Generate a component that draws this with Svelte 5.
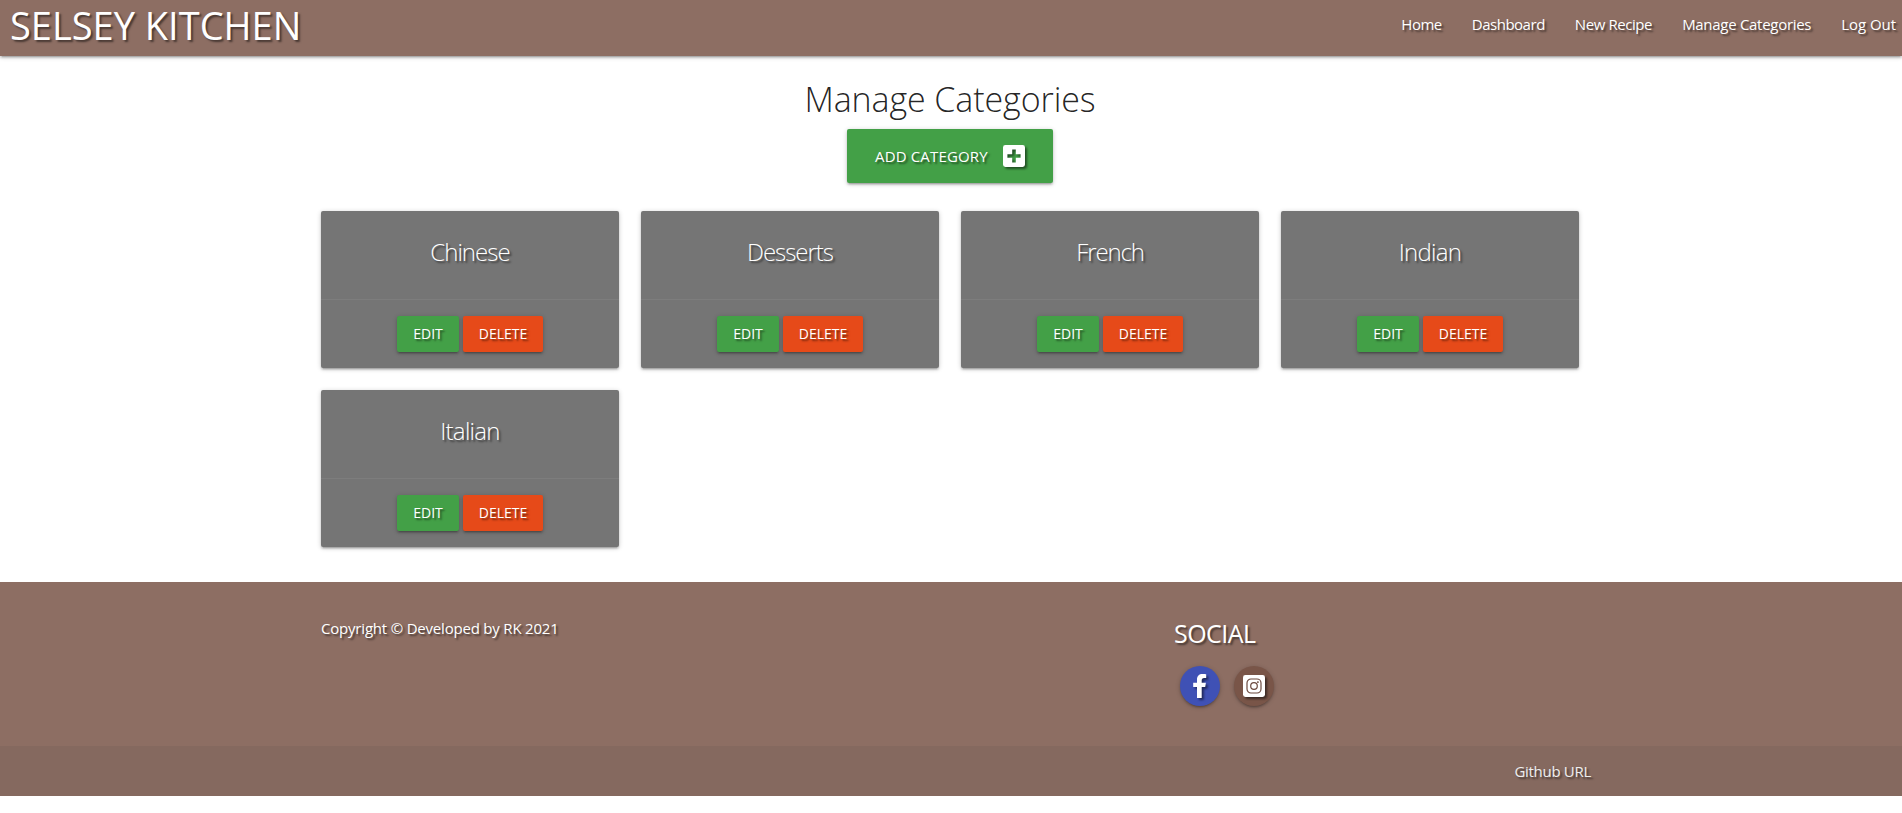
<script>
  const links = [
    { label: 'Home', tracking: -0.5 },
    { label: 'Dashboard', tracking: -0.48 },
    { label: 'New Recipe', tracking: -0.42 },
    { label: 'Manage Categories', tracking: -0.29 },
    { label: 'Log Out', tracking: -0.05 }
  ];
  const categories = [
    { name: 'Chinese', tracking: -0.95 },
    { name: 'Desserts', tracking: -1.05 },
    { name: 'French', tracking: -1.15 },
    { name: 'Indian', tracking: -0.7 },
    { name: 'Italian', tracking: -0.7 }
  ];
</script>

<header>
  <a class="logo" href="#home">SELSEY KITCHEN</a>
  <nav>
    {#each links as link}
      <a href="#nav" style:letter-spacing="{link.tracking}px">{link.label}</a>
    {/each}
  </nav>
</header>

<main>
  <h1>Manage Categories</h1>
  <a class="add" href="#add">
    <span>ADD CATEGORY</span>
    <svg class="icon" width="22" height="22" viewBox="0 0 22 22">
      <path fill="#fff" fill-rule="evenodd" d="M2.4 0h17.2A2.4 2.4 0 0 1 22 2.4v17.2a2.4 2.4 0 0 1-2.4 2.4H2.4A2.4 2.4 0 0 1 0 19.6V2.4A2.4 2.4 0 0 1 2.4 0zM9.200 4.400v4.800H4.400v3.600h4.800v4.800h3.600v-4.800h4.800v-3.600h-4.800V4.400z" />
    </svg>
  </a>
  <section class="grid">
    {#each categories as category}
      <article>
        <h2 style:letter-spacing="{category.tracking}px">{category.name}</h2>
        <div class="actions">
          <a class="btn edit" href="#edit">EDIT</a>
          <a class="btn delete" href="#delete">DELETE</a>
        </div>
      </article>
    {/each}
  </section>
</main>

<footer>
  <div class="columns">
    <p>Copyright © Developed by RK 2021</p>
    <div class="social">
      <h3>SOCIAL</h3>
      <div class="circles">
        <a class="circle facebook" href="#facebook" aria-label="Facebook">
          <svg class="icon" width="14" height="24" viewBox="0 0 14 24">
            <path fill="#fff" d="M4 24V13.100H.2V8.800H4V5.600C4 1.900 6.100 0 9.500 0c1.500 0 3.700.2 3.700.2v3.900h-2C9.300 4.100 8.700 5.200 8.700 6.400v2.400h4.200l-.7 4.300H8.700V24z" />
          </svg>
        </a>
        <a class="circle instagram" href="#instagram" aria-label="Instagram">
          <svg class="icon" width="22" height="22" viewBox="0 0 22 22">
            <rect width="22" height="22" rx="2.4" fill="#fff" />
            <g fill="none" stroke="#6b4a3f" stroke-width="1.2">
              <rect x="4" y="4" width="14" height="14" rx="4" />
              <circle cx="11" cy="11" r="3.300" />
            </g>
            <circle cx="14.900" cy="7.100" r=".95" fill="#6b4a3f" />
          </svg>
        </a>
      </div>
    </div>
  </div>
  <div class="bar"><a href="#github">Github URL</a></div>
</footer>

<style>
  :global(body) {
    margin: 0;
    background: #fff;
    font: 15px/1.5 'Open Sans', 'Noto Sans', sans-serif;
  }
  a {
    color: #fff;
    text-decoration: none;
  }
  h1, h2, h3, p {
    margin: 0;
  }
  header, footer, .add, h2, .btn {
    text-shadow: 2px 2px 2px rgba(0, 0, 0, 0.5);
  }
  header, .add, article, .btn, .circle {
    box-shadow: 0 2px 2px 0 rgba(0, 0, 0, 0.14), 0 3px 1px -2px rgba(0, 0, 0, 0.12), 0 1px 5px 0 rgba(0, 0, 0, 0.2);
  }
  header {
    display: flex;
    justify-content: space-between;
    height: 56px;
    padding: 0 6px 0 10px;
    box-sizing: border-box;
    background: #8d6e63;
    line-height: 49px;
  }
  .logo {
    font-size: 38px;
    line-height: 51px;
  }
  nav {
    display: flex;
    gap: 30px;
  }
  main {
    display: flex;
    flex-direction: column;
    align-items: center;
    padding: 21px 0 35px;
  }
  h1 {
    margin-right: 2px;
    font-size: 34px;
    font-weight: 350;
    line-height: 44px;
    letter-spacing: -0.1px;
    color: rgba(0, 0, 0, 0.87);
  }
  .add {
    display: flex;
    align-items: center;
    justify-content: space-between;
    box-sizing: border-box;
    width: 206px;
    height: 54px;
    margin: 8px 2px 28px 0;
    padding: 0 28px;
    border-radius: 2px;
    background: #43a047;
    letter-spacing: 0.15px;
    white-space: nowrap;
  }
  .icon {
    display: block;
    overflow: visible;
    filter: drop-shadow(2px 2px 1px rgba(0, 0, 0, 0.5));
  }
  .grid {
    display: grid;
    grid-template-columns: repeat(4, 298px);
    gap: 22px;
    width: 1260px;
  }
  article {
    border-radius: 2px;
    background: #757575;
  }
  h2 {
    padding: 24px 0 31px;
    color: #fff;
    font-size: 24px;
    font-weight: 330;
    line-height: 33px;
    text-align: center;
  }
  .actions {
    display: flex;
    justify-content: center;
    gap: 4px;
    padding: 16px;
    border-top: 1px solid rgba(160, 160, 160, 0.2);
  }
  .btn {
    width: 62px;
    border-radius: 2px;
    font-size: 14px;
    line-height: 36px;
    text-align: center;
  }
  .edit {
    background: #43a047;
  }
  .delete {
    width: 80px;
    background: #e64a19;
  }
  footer {
    background: #8d6e63;
    color: #fff;
  }
  .columns {
    display: grid;
    grid-template-columns: 853px 407px;
    justify-content: center;
    box-sizing: border-box;
    height: 164px;
    padding-top: 35px;
  }
  .columns p {
    letter-spacing: -0.2px;
  }
  h3 {
    font-size: 25px;
    font-weight: 400;
    line-height: 32px;
    letter-spacing: -0.55px;
  }
  .circles {
    display: flex;
    gap: 14px;
    padding: 17px 6px;
  }
  .circle {
    display: flex;
    align-items: center;
    justify-content: center;
    width: 40px;
    height: 40px;
    border-radius: 50%;
  }
  .facebook {
    background: #3f51b5;
  }
  .instagram {
    background: #795548;
  }
  .bar {
    display: flex;
    justify-content: flex-end;
    padding-right: 311px;
    background: rgba(51, 51, 51, 0.08);
    line-height: 50px;
    letter-spacing: -0.3px;
  }
  .bar a {
    color: #eee;
  }
</style>
